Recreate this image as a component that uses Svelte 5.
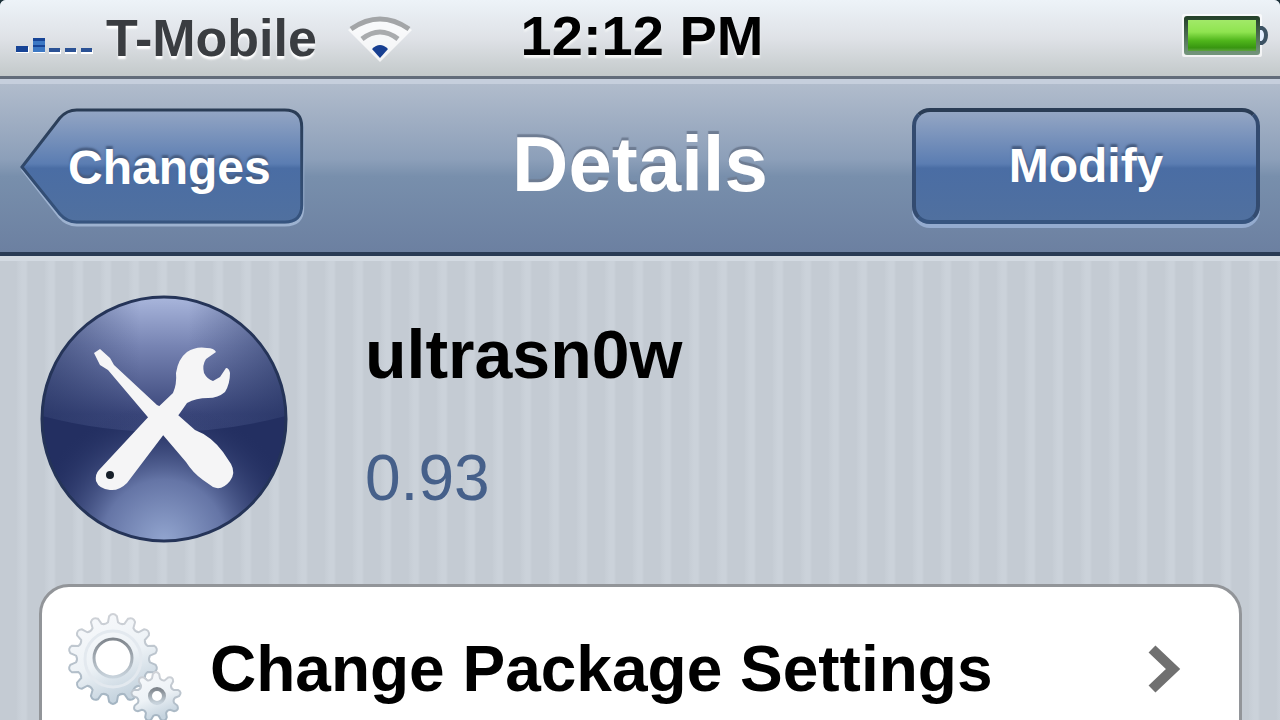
<script>
  // Builds a closed gear outline with rounded teeth around a centre.
  function gear(cx, cy, outer, inner, teeth) {
    const step = (Math.PI * 2) / teeth;
    const at = (r, a) => `${(cx + r * Math.cos(a)).toFixed(1)} ${(cy + r * Math.sin(a)).toFixed(1)}`;
    let d = '';
    for (let i = 0; i < teeth; i++) {
      const a = i * step - Math.PI / 2;
      d += `${i ? 'L' : 'M'}${at(inner, a - step * 0.3)}`;
      d += `L${at(outer - 2, a - step * 0.2)}`;
      d += `Q${at(outer + 2, a)} ${at(outer - 2, a + step * 0.2)}`;
      d += `L${at(inner, a + step * 0.3)}`;
      d += `Q${at(inner - 2, a + step * 0.5)} ${at(inner, a + step * 0.7)}`;
    }
    return d + 'Z';
  }

  const bigGear = gear(49, 48, 45, 37, 14);
  const smallGear = gear(92, 86, 25, 19, 9);
</script>

<div class="screen">
  <div class="status">
    <div class="carrier">
      <svg class="signal" width="78" height="20" viewBox="0 0 78 20" aria-hidden="true">
        <path d="M0 11H13V17H0ZM17 3H29V17H17ZM33 14H45V18H33ZM49 14H61V18H49ZM65 14H77V18H65Z" fill="#fff" />
        <path d="M0 10H12V16H0Z" fill="#174496" />
        <path d="M17 2H29V16H17Z" fill="#3c78c4" />
        <path d="M17 2H29V5H17ZM17 9H29V11H17Z" fill="#174496" />
        <path d="M33 12H44V16H33ZM49 12H60V16H49ZM65 12H76V16H65Z" fill="#2b5295" />
      </svg>
      <span>T-Mobile</span>
      <svg class="wifi" width="66" height="50" viewBox="0 0 66 50" aria-hidden="true">
        <path d="M33 49L1 17Q33-7 65 17Z" fill="#fff" opacity=".75" />
        <path d="M4 16Q33-4 62 16" fill="none" stroke="#a3a5a7" stroke-width="5" />
        <path d="M15 26Q33 12 51 26" fill="none" stroke="#a9abad" stroke-width="5" />
        <path d="M25 36Q33 28 41 36L33 45Z" fill="#173f91" />
      </svg>
    </div>
    <time>12:12 PM</time>
    <svg class="battery" width="86" height="46" viewBox="0 0 86 46" role="img" aria-label="Battery full">
      <defs>
        <linearGradient id="charge" x2="0" y2="1">
          <stop offset="0" stop-color="#a4ea6c" />
          <stop offset=".4" stop-color="#8fe450" />
          <stop offset=".65" stop-color="#4fb51b" />
          <stop offset=".85" stop-color="#389611" />
          <stop offset="1" stop-color="#74ad5a" />
        </linearGradient>
        <linearGradient id="shell" x2="0" y2="1">
          <stop offset="0" stop-color="#26432b" />
          <stop offset="1" stop-color="#72937a" />
        </linearGradient>
      </defs>
      <rect x="0" y="1" width="80" height="43" rx="2" fill="#fff" opacity=".7" />
      <path d="M76 15H80Q84 17 84 22Q84 28 80 30H76" fill="#e4efff" stroke="#3c5263" stroke-width="4" />
      <rect x="4" y="5" width="72" height="35" rx="1" fill="url(#charge)" stroke="url(#shell)" stroke-width="4" />
    </svg>
  </div>

  <header>
    <button class="back" type="button">
      <svg viewBox="0 0 286 122" preserveAspectRatio="none" aria-hidden="true">
        <defs>
          <linearGradient id="face" x2="0" y2="1">
            <stop offset="0" stop-color="#94a6c4" />
            <stop offset=".48" stop-color="#5b7db2" />
            <stop offset=".52" stop-color="#4a6da4" />
            <stop offset="1" stop-color="#50709f" />
          </linearGradient>
          <linearGradient id="edge" x2="0" y2="1">
            <stop offset="0" stop-color="#2a3c55" />
            <stop offset="1" stop-color="#36547f" />
          </linearGradient>
        </defs>
        <path d="M3 63L40 13Q47 5 57 5H266Q284 5 284 23V101Q284 118 266 118H57Q47 118 40 110Z" fill="none" stroke="#9db2d0" stroke-width="3" />
        <path d="M2 60L40 11Q47 3 57 3H266Q283 3 283 20V98Q283 115 266 115H57Q47 115 40 107Z" fill="url(#face)" stroke="url(#edge)" stroke-width="3" />
      </svg>
      <span>Changes</span>
    </button>
    <h1>Details</h1>
    <button class="modify" type="button">Modify</button>
  </header>

  <main>
    <section class="package">
      <svg class="badge" width="250" height="250" viewBox="0 0 250 250" aria-hidden="true">
        <defs>
          <linearGradient id="ball" x2="0" y2="1">
            <stop offset="0" stop-color="#a9b6dc" />
            <stop offset=".2" stop-color="#7784b3" />
            <stop offset=".48" stop-color="#3a467a" />
            <stop offset="1" stop-color="#2b3869" />
          </linearGradient>
          <radialGradient id="glow" cx=".5" cy="1" r=".56">
            <stop offset="0" stop-color="#92a5cf" />
            <stop offset=".45" stop-color="#6575a6" />
            <stop offset="1" stop-color="#263264" stop-opacity="0" />
          </radialGradient>
          <linearGradient id="side">
            <stop offset="0" stop-color="#22305f" stop-opacity=".55" />
            <stop offset=".4" stop-color="#22305f" stop-opacity="0" />
            <stop offset=".6" stop-color="#22305f" stop-opacity="0" />
            <stop offset="1" stop-color="#22305f" stop-opacity=".55" />
          </linearGradient>
        </defs>
        <circle cx="125" cy="125" r="122" fill="url(#ball)" />
        <circle cx="125" cy="125" r="122" fill="url(#side)" />
        <path d="M3 122Q125 154 247 122A122 122 0 0 1 3 122Z" fill="#232f61" />
        <circle cx="125" cy="125" r="122" fill="url(#glow)" />
        <circle cx="125" cy="125" r="122" fill="none" stroke="#253458" stroke-width="3" />
        <g fill="#f5f5f6">
          <path d="M55 59L61 55L71 64L75 71L118 111L139 121L156 136Q172 142 184 158L192 170Q197 179 191 187Q183 197 174 193L164 186Q154 179 147 168L124 141L69 76L61 71Z" />
          <path d="M60 176L113 119L134 99Q138 90 137 79Q139 65 148 58Q157 52 168 54Q175 54 177 58L167 65Q163 71 165 79Q168 85 174 87L181 83L187 74Q190 74 191 79Q191 90 186 98Q179 104 169 104Q157 104 148 109L141 119L88 189Q80 197 71 196Q60 195 57 187Q56 180 60 176Z" />
        </g>
        <circle cx="71" cy="181" r="4" fill="#182029" />
      </svg>
      <div class="about">
        <h2>ultrasn0w</h2>
        <p>0.93</p>
      </div>
    </section>

    <nav>
      <a href="#settings">
        <svg class="gears" width="120" height="116" viewBox="0 0 120 116" aria-hidden="true">
          <defs>
            <linearGradient id="steel" x2=".4" y2="1">
              <stop offset="0" stop-color="#f9fafc" />
              <stop offset=".6" stop-color="#edf2f6" />
              <stop offset="1" stop-color="#c6d4df" />
            </linearGradient>
            <linearGradient id="rim" x2="0" y2="1">
              <stop offset="0" stop-color="#cfd2d7" />
              <stop offset="1" stop-color="#a3b4c2" />
            </linearGradient>
            <linearGradient id="bore" x2="0" y2="1">
              <stop offset="0" stop-color="#80868d" />
              <stop offset="1" stop-color="#c8d3dc" />
            </linearGradient>
          </defs>
          <path d={bigGear} fill="url(#steel)" stroke="url(#rim)" stroke-width="2" />
          <circle cx="49" cy="48" r="28" fill="none" stroke="#e3e9ef" stroke-width="3" />
          <circle cx="49" cy="47" r="19" fill="#fff" stroke="url(#bore)" stroke-width="3" />
          <path d={smallGear} fill="url(#steel)" stroke="url(#rim)" stroke-width="2" />
          <circle cx="93" cy="85" r="7" fill="#fff" stroke="url(#bore)" stroke-width="4" />
        </svg>
        <span>Change Package Settings</span>
        <svg class="chevron" width="34" height="50" viewBox="0 0 34 50" aria-hidden="true">
          <path d="M5 5L26 25L5 45" fill="none" stroke="#707070" stroke-width="10" />
        </svg>
      </a>
    </nav>
  </main>
</div>

<style>
  :global(body) {
    margin: 0;
    background: #1b3038;
  }

  .screen {
    display: flex;
    flex-direction: column;
    height: 100vh;
    overflow: hidden;
    border-radius: 6px 6px 0 0;
    font-family: "Liberation Sans", Arial, Helvetica, sans-serif;
    font-weight: bold;
    background: #c5ccd4;
  }

  .status {
    display: grid;
    grid-template-columns: 1fr auto 1fr;
    align-items: center;
    flex: none;
    box-sizing: border-box;
    height: 79px;
    padding: 0 12px 4px 16px;
    border-bottom: 3px solid #626c7a;
    background: linear-gradient(#edf3f8, #dfe2e7 50%, #c3c9ca);
  }

  .carrier {
    display: flex;
    align-items: center;
    gap: 12px;
    font-size: 52px;
    line-height: 60px;
    color: #3a3d41;
    text-shadow: 0 3px 2px #fff;
    padding-top: 4px;
  }

  .signal {
    margin-top: 16px;
  }

  .wifi {
    margin-left: 18px;
  }

  time {
    font-size: 56px;
    line-height: 72px;
    color: #000;
    text-shadow: 0 3px 2px #f4f6f6;
  }

  .battery {
    justify-self: end;
  }

  header {
    display: grid;
    grid-template-columns: 1fr auto 1fr;
    align-items: center;
    flex: none;
    box-sizing: border-box;
    height: 177px;
    padding: 0 20px;
    border-top: 5px solid #c6cfdd;
    border-bottom: 4px solid #293b55;
    background: linear-gradient(#b1bccc, #8c9fb9 45%, #788fac 55%, #6c80a1);
  }

  h1,
  h2,
  p {
    margin: 0;
  }

  h1 {
    padding-bottom: 8px;
    font-size: 78px;
    line-height: 92px;
    color: #fff;
    text-shadow: 0 -3px 1px #6e7c92;
  }

  button {
    font: bold 48px/56px "Liberation Sans", Arial, Helvetica, sans-serif;
    color: #fff;
    text-shadow: 0 -3px 2px #465c80;
    cursor: pointer;
  }

  .back {
    position: relative;
    justify-self: start;
    height: 122px;
    padding: 0 34px 0 48px;
    border: 0;
    background: none;
  }

  .back svg {
    position: absolute;
    inset: 0;
    width: 100%;
    height: 100%;
  }

  .back span {
    position: relative;
  }

  .modify {
    justify-self: end;
    box-sizing: border-box;
    width: 348px;
    height: 116px;
    margin-bottom: 4px;
    border: 4px solid #36547f;
    border-color: #2a3c55 #334b70 #36547f;
    border-radius: 18px;
    background: linear-gradient(#94a6c4, #5b7db2 48%, #4a6da4 52%, #50709f);
    box-shadow: 0 4px 0 #94abcf;
  }

  main {
    flex: 1;
    padding: 38px 38px 0 39px;
    background: repeating-linear-gradient(90deg, #c4cbd3 0 16px, #c7ced6 18px, #cbd2da 22px 26px, #c4cbd3 28px);
    box-shadow: inset 0 5px 0 #d3dae2;
  }

  .package {
    display: flex;
    gap: 76px;
  }

  .about {
    display: flex;
    flex-direction: column;
    gap: 44px;
    padding-top: 20px;
  }

  h2 {
    font-size: 68px;
    line-height: 80px;
    color: #000;
  }

  p {
    font-size: 64px;
    font-weight: normal;
    line-height: 80px;
    color: #46608a;
  }

  nav {
    margin-top: 40px;
    border: 3px solid #929599;
    border-radius: 30px;
    background: #fff;
  }

  a {
    display: flex;
    align-items: center;
    height: 164px;
    padding: 0 58px 0 22px;
    font-size: 64px;
    line-height: 76px;
    color: #000;
    text-decoration: none;
  }

  a span {
    flex: 1;
    padding-left: 26px;
  }
</style>
